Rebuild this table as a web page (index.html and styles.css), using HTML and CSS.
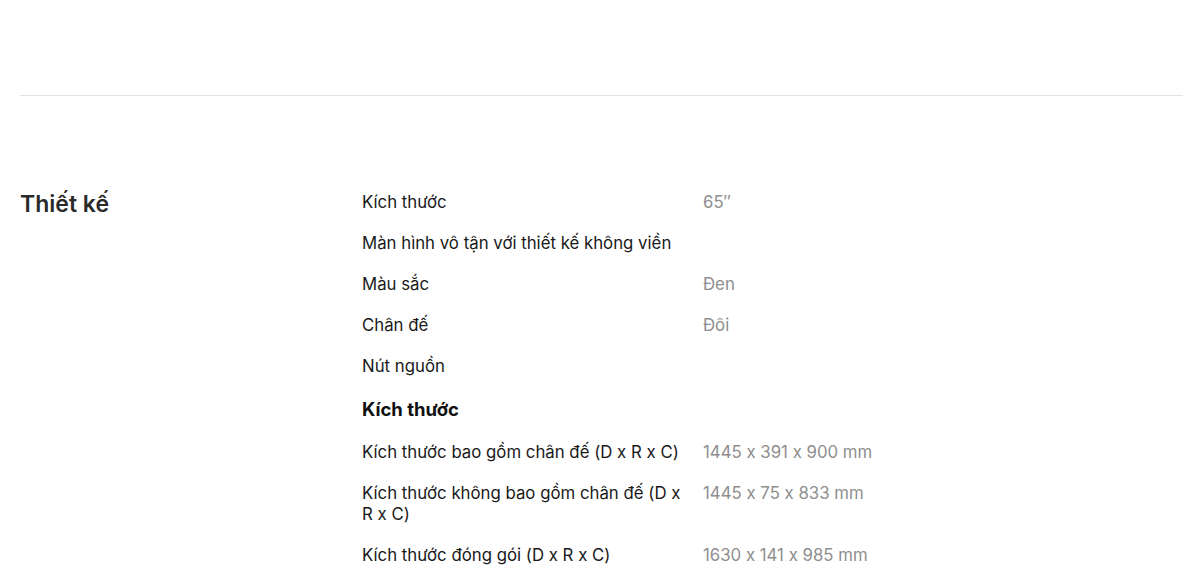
FILE: index.html
```html
<!DOCTYPE html>
<html lang="vi">
<head>
<meta charset="utf-8">
<title>Thông số</title>
<link rel="stylesheet" href="styles.css">
</head>
<body>
<div class="page">
  <div class="top-space"></div>
  <hr class="divider">
  <section class="spec">
    <h2 class="spec-title">Thiết kế</h2>
    <div class="spec-list">
      <div class="row"><div class="label">Kích thước</div><div class="value">65″</div></div>
      <div class="row"><div class="label">Màn hình vô tận với thiết kế không viền</div><div class="value"></div></div>
      <div class="row"><div class="label">Màu sắc</div><div class="value">Đen</div></div>
      <div class="row"><div class="label">Chân đế</div><div class="value">Đôi</div></div>
      <div class="row"><div class="label">Nút nguồn</div><div class="value"></div></div>
      <h3 class="sub">Kích thước</h3>
      <div class="row"><div class="label">Kích thước bao gồm chân đế (D x R x C)</div><div class="value">1445 x 391 x 900 mm</div></div>
      <div class="row"><div class="label">Kích thước không bao gồm chân đế (D x R x C)</div><div class="value">1445 x 75 x 833 mm</div></div>
      <div class="row"><div class="label">Kích thước đóng gói (D x R x C)</div><div class="value">1630 x 141 x 985 mm</div></div>
    </div>
  </section>
</div>
</body>
</html>
```

FILE: styles.css
```css
html, body {
  margin: 0;
  padding: 0;
  background: #ffffff;
}
body {
  font-family: Inter, "Noto Sans", "Liberation Sans", sans-serif;
  font-feature-settings: "calt" 0;
  color: #191919;
}
.page {
  padding: 0 17px 0 20px;
}
.top-space {
  height: 95px;
}
.divider {
  margin: 0;
  border: 0;
  border-top: 1px solid #e3e3e3;
}
.spec {
  display: grid;
  grid-template-columns: 342px 1fr;
  padding-top: 96px;
}
.spec-title {
  margin: 0;
  font-size: 23px;
  line-height: 24px;
  font-weight: 600;
  color: #2a2a2a;
}
.spec-list {
  display: flex;
  flex-direction: column;
  gap: 20px;
}
.row {
  display: grid;
  grid-template-columns: 321px 1fr;
  column-gap: 20px;
  font-size: 16.8px;
  line-height: 21px;
}
.value {
  color: #8e8e8e;
}
.sub {
  margin: 1px 0 2px;
  font-size: 18.5px;
  line-height: 22px;
  font-weight: 700;
  color: #111;
}
```
